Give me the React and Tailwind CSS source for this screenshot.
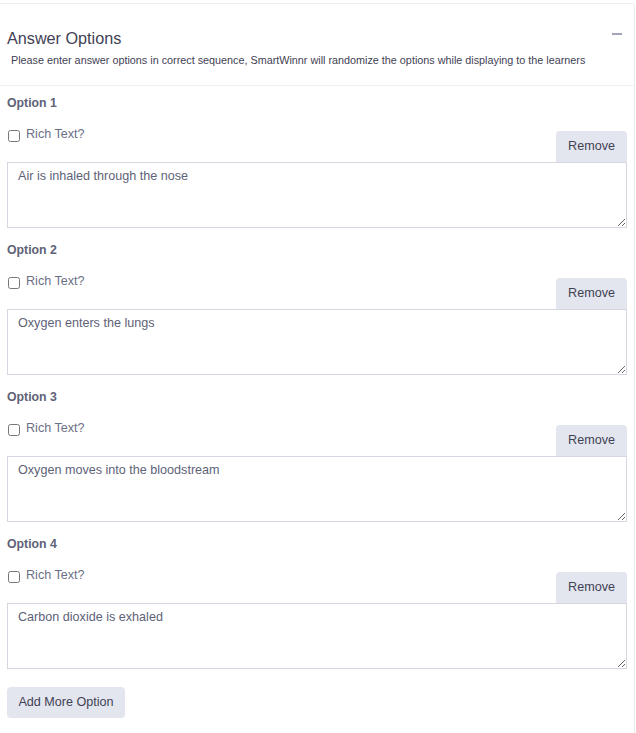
import { useState } from 'react';

const initialOptions = [
  'Air is inhaled through the nose',
  'Oxygen enters the lungs',
  'Oxygen moves into the bloodstream',
  'Carbon dioxide is exhaled',
];

export default function App() {
  const [options, setOptions] = useState(initialOptions);

  return (
    <div className="min-h-screen bg-white pt-[3px] font-['Liberation_Sans',Arial,sans-serif]">
      <div className="w-[635px] border-t border-r border-[#ebedf3] rounded-tr-[4px]">
        {/* HEADER */}
        <div className="relative border-b border-[#eff1f5] pl-[7px] pr-[7px] pt-[22px] pb-[17px]">
          <h3 className="text-[16.2px] leading-[24px] text-[#3f4254]">Answer Options</h3>
          <p className="mt-[2px] pl-[4px] text-[10.8px] leading-[16px] text-[#3f4254]">
            Please enter answer options in correct sequence, SmartWinnr will randomize the options while displaying to the learners
          </p>
          <span className="absolute right-[12px] top-[29px] h-[2px] w-[10px] bg-[#a1a5b7]" />
        </div>

        {/* OPTIONS */}
        <div className="pl-[7px] pr-[7px] pt-[7px] pb-[16px]">
          {options.map((text, idx) => (
            <div key={idx} className="mb-[12px]">
              <label className="block text-[12.3px] font-bold leading-[20px] text-[#5e6278]">Option {idx + 1}</label>
              <div className="mt-[11px] flex h-[38px] justify-between">
                <label className="mt-[1px] flex h-[18px] items-center gap-[6px] text-[12.6px] text-[#6b6f85]">
                  <input type="checkbox" className="ml-px mt-[3px] h-[12px] w-[12px]" />
                  Rich Text?
                </label>
                <button className="h-[31px] self-end rounded-t-[4px] bg-[#e4e6ef] px-[12px] text-[12.6px] text-[#3f4254]">
                  Remove
                </button>
              </div>
              <textarea
                className="block h-[66px] w-full resize-y border border-[#d5d6e0] px-[10px] py-[5px] text-[12.6px] leading-[16px] text-[#5e6278] outline-none"
                value={text}
                onChange={e => setOptions(options.map((o, i) => (i === idx ? e.target.value : o)))}
              />
            </div>
          ))}
          <button className="mt-[6px] h-[31px] w-[118px] rounded-[4px] bg-[#e4e6ef] text-[12.6px] text-[#3f4254]">
            Add More Option
          </button>
        </div>
      </div>
    </div>
  );
}
